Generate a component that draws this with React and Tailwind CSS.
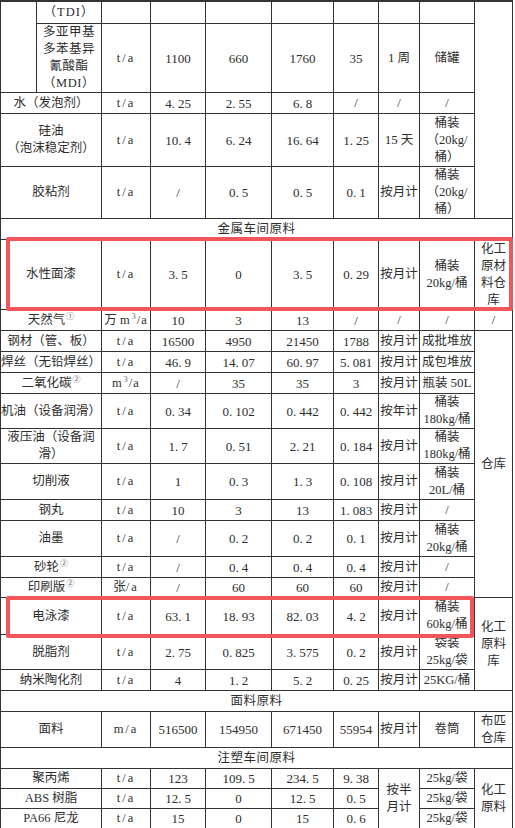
import React from "react";

function N({ v }) {
  const s = String(v);
  const i = s.indexOf(".");
  if (i < 0) return <span className="text-[13px]">{s}</span>;
  return (
    <span className="text-[13px]">
      {s.slice(0, i)}
      <span className="mr-[3px]">.</span>
      {s.slice(i + 1)}
    </span>
  );
}

function C({ children, className = "" }) {
  return (
    <div
      className={
        "border-r border-b border-[#333] flex items-center justify-center text-center leading-[17px] whitespace-nowrap " +
        className
      }
    >
      {children}
    </div>
  );
}

function U({ children }) {
  return <span className="tracking-[2px]">{children}</span>;
}

function Sup({ children }) {
  return <sup className="text-[8px] text-[#666] ml-[1px] -top-[5px]">{children}</sup>;
}

function Row({ name, unit = "t/a", a, b, c, d, period = "按月计", pack, nameSpan = true }) {
  return (
    <>
      <C className={nameSpan ? "col-span-2" : ""}>{name}</C>
      <C>{typeof unit === "string" ? <U>{unit}</U> : unit}</C>
      <C><N v={a} /></C>
      <C><N v={b} /></C>
      <C><N v={c} /></C>
      <C><N v={d} /></C>
      {period !== null && <C>{period}</C>}
      {pack !== null && <C>{pack}</C>}
    </>
  );
}

export default function App() {
  return (
    <div className="w-[515px] h-[828px] overflow-hidden bg-white relative font-['Liberation_Serif','Noto_Sans_CJK_SC',serif] text-[12.5px] text-[#2e2e2e]">
      <div className="grid w-[513px] border-l border-t-2 border-[#333] grid-cols-[36px_65px_49px_55px_66px_62px_45px_41px_55px_38px] grid-rows-[22px_69px_21px_53px_52px_21px_70px_21px_21px_21px_21px_35px_35px_36px_21px_36px_21px_20px_37px_35px_21px_21px_36px_21px_20px_20px_20px]">
        {/* Row 1 */}
        <C className="row-span-2"></C>
        <C><span className="tracking-[1px]">（TDI）</span></C>
        <C></C>
        <C></C>
        <C></C>
        <C></C>
        <C></C>
        <C></C>
        <C></C>
        <C className="row-span-5"></C>
        {/* Row 2 */}
        <C>
          <span className="tracking-[0.5px]">
            多亚甲基<br />多苯基异<br />氰酸酯<br />（MDI）
          </span>
        </C>
        <C><U>t/a</U></C>
        <C><N v="1100" /></C>
        <C><N v="660" /></C>
        <C><N v="1760" /></C>
        <C><N v="35" /></C>
        <C><span><span className="text-[13px]">1</span> 周</span></C>
        <C>储罐</C>
        {/* Row 3 */}
        <C className="col-span-2">水（发泡剂）</C>
        <C><U>t/a</U></C>
        <C><N v="4.25" /></C>
        <C><N v="2.55" /></C>
        <C><N v="6.8" /></C>
        <C>/</C>
        <C>/</C>
        <C>/</C>
        {/* Row 4 */}
        <Row
          name={<span>硅油<br />（泡沫稳定剂）</span>}
          a="10.4" b="6.24" c="16.64" d="1.25"
          period={<span><span className="text-[13px]">15</span> 天</span>}
          pack={<span>桶装<br />（20kg/<br />桶）</span>}
        />
        {/* Row 5 */}
        <Row name="胶粘剂" a="/" b="0.5" c="0.5" d="0.1" pack={<span>桶装<br />（20kg/<br />桶）</span>} />
        {/* Row 6 */}
        <C className="col-span-10 tracking-[0.5px]">金属车间原料</C>
        {/* Row 7 */}
        <Row name="水性面漆" a="3.5" b="0" c="3.5" d="0.29" pack={<span>桶装<br />20kg/桶</span>} />
        <C><span>化工<br />原材<br />料仓<br />库</span></C>
        {/* Row 8 */}
        <Row
          name={<span>天然气<Sup>①</Sup></span>}
          unit={<span>万 <span className="tracking-[1px]">m<Sup>3</Sup>/a</span></span>}
          a="10" b="3" c="13" d="/" period="/" pack="/"
        />
        <C>/</C>
        {/* Row 9 */}
        <Row name="钢材（管、板）" a="16500" b="4950" c="21450" d="1788" pack="成批堆放" />
        <C className="row-span-10">仓库</C>
        <Row name="焊丝（无铅焊丝）" a="46.9" b="14.07" c="60.97" d="5.081" pack="成包堆放" />
        <Row
          name={<span>二氧化碳<Sup>②</Sup></span>}
          unit={<span className="tracking-[1px]">m<Sup>3</Sup>/a</span>}
          a="/" b="35" c="35" d="3" pack={<span>瓶装 <span className="text-[13px]">50L</span></span>}
        />
        <Row name="机油（设备润滑）" a="0.34" b="0.102" c="0.442" d="0.442" period="按年计" pack={<span>桶装<br />180kg/桶</span>} />
        <Row name={<span>液压油（设备润<br />滑）</span>} a="1.7" b="0.51" c="2.21" d="0.184" pack={<span>桶装<br />180kg/桶</span>} />
        <Row name="切削液" a="1" b="0.3" c="1.3" d="0.108" pack={<span>桶装<br />20L/桶</span>} />
        <Row name="钢丸" a="10" b="3" c="13" d="1.083" pack="/" />
        <Row name="油墨" a="/" b="0.2" c="0.2" d="0.1" pack={<span>桶装<br />20kg/桶</span>} />
        <Row name={<span>砂轮<Sup>②</Sup></span>} a="/" b="0.4" c="0.4" d="0.4" pack="/" />
        <Row name={<span>印刷版<Sup>②</Sup></span>} unit={<span>张<U>/a</U></span>} a="/" b="60" c="60" d="60" pack="/" />
        {/* 电泳漆 */}
        <Row name="电泳漆" a="63.1" b="18.93" c="82.03" d="4.2" pack={<span>桶装<br />60kg/桶</span>} />
        <C className="row-span-3"><span>化工<br />原料<br />库</span></C>
        <Row name="脱脂剂" a="2.75" b="0.825" c="3.575" d="0.2" pack={<span>袋装<br />25kg/袋</span>} />
        <Row name="纳米陶化剂" a="4" b="1.2" c="5.2" d="0.25" pack="25KG/桶" />
        <C className="col-span-10 tracking-[0.5px]">面料原料</C>
        <Row name="面料" unit="m/a" a="516500" b="154950" c="671450" d="55954" pack="卷筒" />
        <C><span>布匹<br />仓库</span></C>
        <C className="col-span-10 tracking-[0.5px]">注塑车间原料</C>
        <Row name="聚丙烯" a="123" b="109.5" c="234.5" d="9.38" period={null} pack={null} />
        <C className="row-span-3"><span>按半<br />月计</span></C>
        <C>25kg/袋</C>
        <C className="row-span-3"><span>化工<br />原料</span></C>
        <Row name="ABS 树脂" a="12.5" b="0" c="12.5" d="0.5" period={null} pack={null} />
        <C>25kg/袋</C>
        <Row name="PA66 尼龙" a="15" b="0" c="15" d="0.6" period={null} pack={null} />
        <C>25kg/袋</C>
      </div>
      <div className="absolute left-[6px] top-[237px] w-[507px] h-[74px] border-4 border-[#f2555a] rounded-[2px] pointer-events-none"></div>
      <div className="absolute left-[6px] top-[596px] w-[468px] h-[42px] border-4 border-[#f2555a] rounded-[2px] pointer-events-none"></div>
    </div>
  );
}
